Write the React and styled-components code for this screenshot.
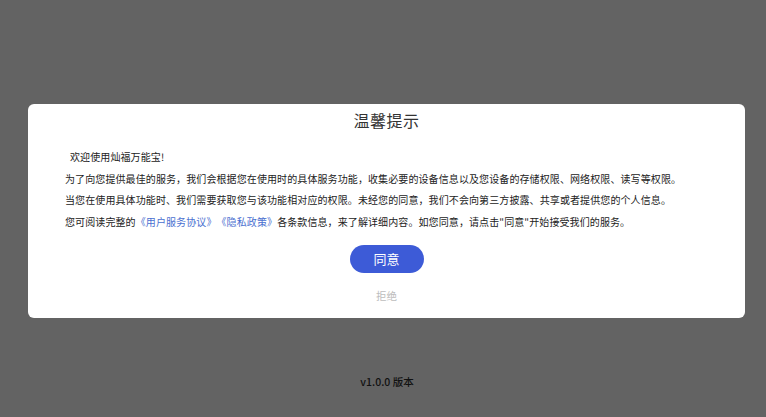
import styled, { createGlobalStyle } from "styled-components";

const GlobalStyle = createGlobalStyle`
  html, body {
    margin: 0;
    padding: 0;
    background: #636363;
  }
  body {
    font-family: "Noto Sans CJK SC", "Noto Sans", sans-serif;
    text-spacing-trim: space-all;
  }
`;

const Screen = styled.div`
  width: 766px;
  height: 417px;
  background: #636363;
  display: flex;
  flex-direction: column;
  align-items: flex-start;
  padding-top: 104px;
  box-sizing: border-box;
`;

const Dialog = styled.div`
  margin-left: 28px;
  width: 717px;
  height: 214px;
  box-sizing: border-box;
  background: #fff;
  border-radius: 6px;
  padding: 4px 0 0 37px;
  display: flex;
  flex-direction: column;
`;

const Title = styled.h2`
  margin: 0;
  padding-right: 37px;
  font-size: 16px;
  letter-spacing: 0.5px;
  font-weight: 400;
  line-height: 24px;
  color: #333;
  text-align: center;
`;

const Body = styled.div`
  margin-top: 14px;
  font-size: 10px;
  letter-spacing: 0.1px;
  line-height: 21.5px;
  color: #222;
`;

const Line = styled.p`
  margin: 0;
  white-space: nowrap;
  padding-left: ${(p) => (p.$indent ? "5px" : "0")};
`;

const Link = styled.span`
  color: #4a6fd0;
`;

const Actions = styled.div`
  margin-top: 13px;
  padding-right: 37px;
  display: flex;
  flex-direction: column;
  align-items: center;
`;

const AgreeButton = styled.button`
  width: 74px;
  height: 28px;
  border: none;
  border-radius: 14px;
  background: #3d5bd7;
  color: #fff;
  font-family: inherit;
  font-size: 13px;
  line-height: 28px;
  padding: 0;
`;

const RefuseButton = styled.button`
  margin-top: 15px;
  border: none;
  background: none;
  padding: 0;
  font-family: inherit;
  font-size: 10.5px;
  line-height: 15px;
  color: #bdbdbd;
`;

const Version = styled.div`
  width: 766px;
  margin-top: 56px;
  padding-left: 8px;
  box-sizing: border-box;
  text-align: center;
  font-size: 10.5px;
  font-weight: 500;
  color: #111;
`;

export default function App() {
  return (
    <>
      <GlobalStyle />
      <Screen>
        <Dialog>
          <Title>温馨提示</Title>
          <Body>
            <Line $indent>欢迎使用灿福万能宝!</Line>
            <Line>
              为了向您提供最佳的服务，我们会根据您在使用时的具体服务功能，收集必要的设备信息以及您设备的存储权限、网络权限、读写等权限。
            </Line>
            <Line>
              当您在使用具体功能时、我们需要获取您与该功能相对应的权限。未经您的同意，我们不会向第三方披露、共享或者提供您的个人信息。
            </Line>
            <Line>
              您可阅读完整的<Link>《用户服务协议》</Link>
              <Link>《隐私政策》</Link>各条款信息，来了解详细内容。如您同意，请点击"同意"开始接受我们的服务。
            </Line>
          </Body>
          <Actions>
            <AgreeButton>同意</AgreeButton>
            <RefuseButton>拒绝</RefuseButton>
          </Actions>
        </Dialog>
        <Version>v1.0.0 版本</Version>
      </Screen>
    </>
  );
}
